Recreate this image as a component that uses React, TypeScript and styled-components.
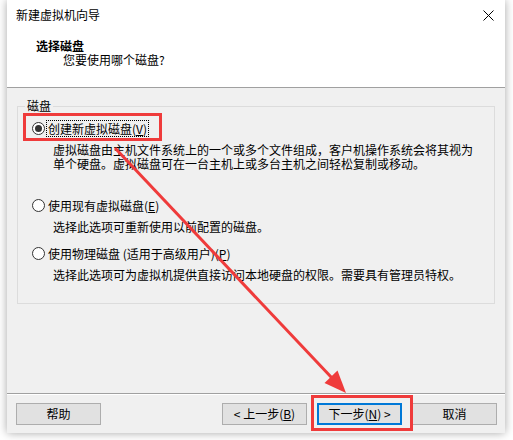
import styled, { createGlobalStyle } from "styled-components";

const GlobalStyle = createGlobalStyle`
  html, body {
    margin: 0;
    padding: 0;
    background: #ffffff;
  }
  body {
    font-family: "Noto Sans CJK SC", "Noto Sans", sans-serif;
    font-size: 12px;
    color: #000;
  }
`;

const Page = styled.div`
  position: relative;
  width: 513px;
  height: 440px;
  overflow: hidden;
`;

const Window = styled.div`
  margin-left: 7px;
  width: 498px;
  height: 433px;
  background: #f0f0f0;
  box-shadow: 0 0 9px rgba(0, 0, 0, 0.35);
  display: flex;
  flex-direction: column;
`;

const Header = styled.div`
  background: #ffffff;
  height: 87px;
  border-bottom: 1px solid #a0a0a0;
`;

const TitleBar = styled.div`
  height: 30px;
  display: flex;
  align-items: center;
  justify-content: space-between;
  padding: 0 11px 0 9px;
  line-height: 14px;
`;

const Heading = styled.div`
  margin-top: 9px;
  padding-left: 29px;
  line-height: 14px;
  font-weight: bold;
`;

const SubHeading = styled.div`
  padding-left: 56px;
  line-height: 13px;
`;

const Body = styled.div`
  flex: 1;
  padding: 11px 10px 0 10px;
`;

const Group = styled.fieldset`
  margin: 0;
  padding: 0;
  height: 205px;
  box-sizing: border-box;
  border: 1px solid #dcdcdc;
  min-width: 0;
`;

const Legend = styled.legend`
  margin-left: 7px;
  padding: 0 2px;
  line-height: 14px;
`;

const Options = styled.div`
  padding-left: 14px;
`;

const Option = styled.div<{ $top: number }>`
  margin-top: ${(p) => p.$top}px;
`;

const RadioRow = styled.div`
  display: flex;
  align-items: center;
  height: 16px;
`;

const Radio = styled.span<{ $on?: boolean }>`
  width: 13px;
  height: 13px;
  box-sizing: border-box;
  border: 1px solid #333333;
  border-radius: 50%;
  background: #ffffff;
  display: flex;
  align-items: center;
  justify-content: center;

  &::after {
    content: "";
    width: 7px;
    height: 7px;
    border-radius: 50%;
    background: ${(p) => (p.$on ? "#333333" : "transparent")};
  }
`;

const Label = styled.span<{ $focus?: boolean }>`
  margin-left: 2px;
  padding: 0 1px;
  line-height: 15px;
  white-space: nowrap;
  outline: ${(p) => (p.$focus ? "1px dotted #000" : "none")};
`;

const Key = styled.span`
  text-decoration: underline;
  text-underline-offset: 1px;
`;

const Desc = styled.div`
  margin-top: 7px;
  padding-left: 21px;
  line-height: 14px;
  white-space: nowrap;
`;

const Footer = styled.div`
  border-top: 1px solid #a0a0a0;
  box-shadow: inset 0 1px 0 #ffffff;
  height: 40px;
  box-sizing: border-box;
  padding: 9px 8px 0 9px;
  display: flex;
  gap: 10px;
`;

const Button = styled.button<{ $default?: boolean }>`
  width: 85px;
  height: 22px;
  box-sizing: border-box;
  padding: 0;
  background: #e1e1e1;
  border: ${(p) => (p.$default ? "2px solid #0078d7" : "1px solid #adadad")};
  font-family: inherit;
  font-size: 12px;
  color: #000;
  line-height: 16px;
  white-space: nowrap;

  &:first-child {
    margin-right: auto;
  }
`;

const Marks = styled.svg`
  position: absolute;
  top: 0;
  left: 0;
  pointer-events: none;
`;

const RED = "#ef3b3b";

export default function App() {
  return (
    <Page>
      <GlobalStyle />
      <Window>
        <Header>
          <TitleBar>
            <span>新建虚拟机向导</span>
            <svg width="11" height="11" viewBox="0 0 11 11">
              <path d="M0.5 0.5 L10.5 10.5 M10.5 0.5 L0.5 10.5" stroke="#000" strokeWidth="1" />
            </svg>
          </TitleBar>
          <Heading>选择磁盘</Heading>
          <SubHeading>您要使用哪个磁盘?</SubHeading>
        </Header>
        <Body>
          <Group>
            <Legend>磁盘</Legend>
            <Options>
              <Option $top={7}>
                <RadioRow>
                  <Radio $on />
                  <Label $focus>
                    创建新虚拟磁盘(<Key>V</Key>)
                  </Label>
                </RadioRow>
                <Desc>
                  虚拟磁盘由主机文件系统上的一个或多个文件组成，客户机操作系统会将其视为
                  <br />
                  单个硬盘。虚拟磁盘可在一台主机上或多台主机之间轻松复制或移动。
                </Desc>
              </Option>
              <Option $top={26}>
                <RadioRow>
                  <Radio />
                  <Label>
                    使用现有虚拟磁盘(<Key>E</Key>)
                  </Label>
                </RadioRow>
                <Desc>选择此选项可重新使用以前配置的磁盘。</Desc>
              </Option>
              <Option $top={11}>
                <RadioRow>
                  <Radio />
                  <Label>
                    使用物理磁盘 (适用于高级用户)(<Key>P</Key>)
                  </Label>
                </RadioRow>
                <Desc>选择此选项可为虚拟机提供直接访问本地硬盘的权限。需要具有管理员特权。</Desc>
              </Option>
            </Options>
          </Group>
        </Body>
        <Footer>
          <Button>帮助</Button>
          <Button>
            &lt; 上一步(<Key>B</Key>)
          </Button>
          <Button $default>
            下一步(<Key>N</Key>) &gt;
          </Button>
          <Button>取消</Button>
        </Footer>
      </Window>
      <Marks width="513" height="440" viewBox="0 0 513 440">
        <rect x="24.5" y="114.5" width="136" height="25" fill="none" stroke={RED} strokeWidth="3" />
        <rect x="312.5" y="396.5" width="99" height="33" fill="none" stroke={RED} strokeWidth="3" />
        <line x1="115" y1="148" x2="332" y2="378" stroke={RED} strokeWidth="3" />
        <polygon points="346,393 324.5,383 337.5,370.5" fill={RED} />
      </Marks>
    </Page>
  );
}
